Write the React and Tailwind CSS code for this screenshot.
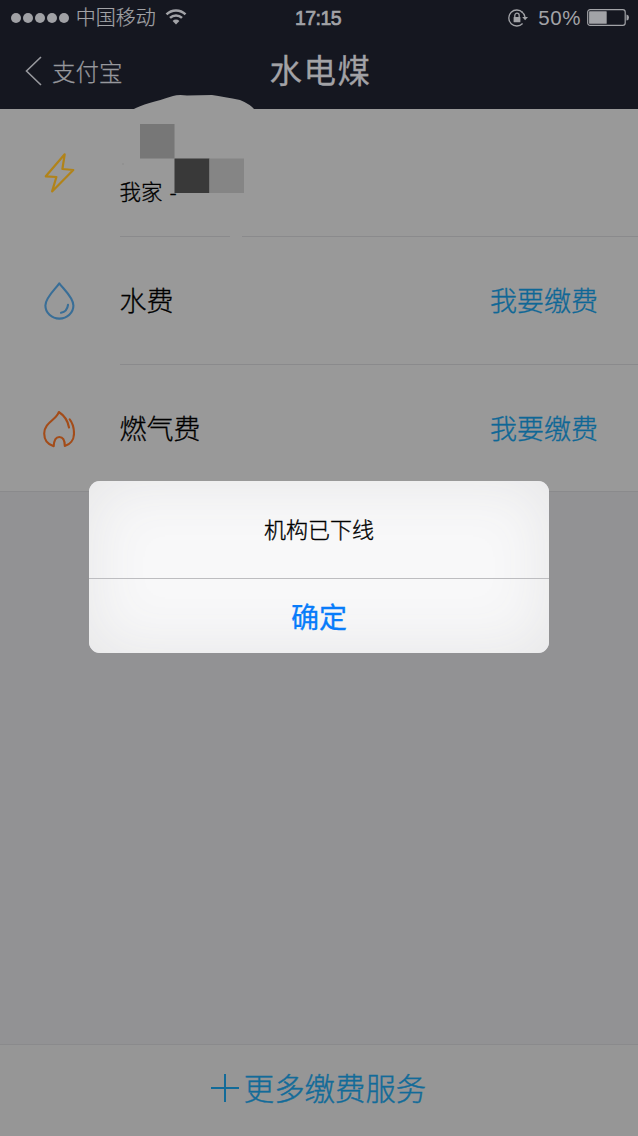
function StatusBar() {
  return (
    <div className="grid h-9 grid-cols-[1fr_auto_1fr] items-center pl-[11px] pr-[9px] text-[#a2a3a7]">
      <div className="flex items-center">
        <div className="flex gap-[2.2px]">
          {[0, 1, 2, 3, 4].map((n) => (
            <span key={n} className="size-[9.8px] rounded-full bg-[#a0a1a5]" />
          ))}
        </div>
        <span className="mb-[2px] ml-[7px] text-[20px] font-light leading-[34px] [-webkit-text-stroke:0.2px]">中国移动</span>
        <svg className="mb-[2px] ml-[9px] h-4 w-[22px]" viewBox="0 0 22 16" fill="none" stroke="currentColor" strokeWidth="2.5">
          <path d="M1.5 5.3 A13.5 13.5 0 0 1 20.5 5.3" />
          <path d="M5 8.9 A8.5 8.5 0 0 1 17 8.9" />
          <path d="M11 15.4 L7.6 12 A4.8 4.8 0 0 1 14.4 12 Z" fill="currentColor" stroke="none" />
        </svg>
      </div>
      <span className="mr-1 font-['Liberation_Sans'] text-[19.5px] font-normal leading-9 tracking-[-0.55px] [-webkit-text-stroke:0.7px]">17:15</span>
      <div className="flex items-center justify-end">
        <svg className="mb-px h-[18px] w-5" viewBox="0 0 20 18" fill="none" stroke="currentColor" strokeWidth="1.3">
          <path d="M14.6 14.5 A8 8 0 1 1 14.6 3.5" />
          <path d="M13.7 2.8 A8 8 0 0 1 17 8" />
          <path d="M14.2 8 H20 L17.1 11.2 Z" fill="currentColor" stroke="none" />
          <rect x="5.6" y="8" width="6.8" height="5.3" rx=".5" fill="currentColor" stroke="none" />
          <path d="M6.8 8.4 V6.4 A2.2 2.2 0 0 1 11.2 6.4 V8.4" />
        </svg>
        <span className="ml-[10px] font-['Liberation_Sans'] text-[20.5px] leading-9 tracking-[0.6px]">50%</span>
        <svg className="mb-px ml-[6px] h-[17px] w-[42px]" viewBox="0 0 42 17" fill="none">
          <rect x=".7" y=".7" width="37.5" height="15.6" rx="2.4" stroke="currentColor" strokeWidth="1.2" />
          <rect x="2.1" y="2.2" width="17.6" height="12.6" rx=".6" fill="#a2a3a7" />
          <path d="M39.5 5.5 Q42 6 42 8.5 Q42 11 39.5 11.5 Z" fill="#a2a3a7" />
        </svg>
      </div>
    </div>
  );
}

function Bolt() {
  return (
    <svg className="h-10 w-8" viewBox="0 0 32 40" fill="none" stroke="#b18319" strokeWidth="2.2" strokeLinejoin="round">
      <path d="M21.7 1.3 L2.8 23.3 L13.4 24 L9.1 38.4 L30.3 17 L19.4 16 Z" />
    </svg>
  );
}

function Drop() {
  return (
    <svg className="mb-[2px] h-10 w-8" viewBox="0 0 32 40" fill="none" stroke="#396e97" strokeWidth="2.1" strokeLinecap="round" strokeLinejoin="round">
      <path d="M16.3 3.3 C12.5 9 2.4 17.3 2.4 25.4 A14 13.2 0 0 0 30.4 25.4 C30.4 17.3 20.5 9 16.3 3.3 Z" />
      <path d="M25 24.8 C24.5 29 22 32 18 32.8" />
    </svg>
  );
}

function Flame() {
  return (
    <svg className="h-10 w-8" viewBox="0 0 32 40" fill="none" stroke="#a34c19" strokeWidth="2.1" strokeLinecap="round" strokeLinejoin="round">
      <path d="M26 18.5 C24.8 11 20.5 6 15.8 3 C14 10.5 1.2 13.5 1.2 24.5 C1.2 31 5 35.5 10.7 37.2 C11 31.5 13 28 16.3 28 C19.7 28 21.8 31.5 21.8 37 C27 35.5 31 31 31 24.5 C31 18.5 30 14.5 26.7 10.3" />
    </svg>
  );
}

function Bill({ icon, name, last }) {
  return (
    <div className="flex h-32">
      <div className="flex w-[120px] items-center pl-[43px]">{icon}</div>
      <div className={`flex flex-1 items-center justify-between pr-[40px] pb-[2px] ${last ? "" : "border-b border-[#8a8a8c]"}`}>
        <span className="-ml-[0.5px] text-[27px] font-light leading-10 text-black [-webkit-text-stroke:0.3px]">{name}</span>
        <span className="text-[27px] font-light leading-10 text-[#0e6796] [-webkit-text-stroke:0.35px]">我要缴费</span>
      </div>
    </div>
  );
}

export default function App() {
  return (
    <div className="relative flex h-[1136px] w-[638px] flex-col overflow-hidden bg-[#929294] font-['Noto_Sans_CJK_SC',sans-serif]">
      <header className="h-[109px] shrink-0 bg-[#151720]">
        <StatusBar />
        <div className="grid h-[73px] grid-cols-[1fr_auto_1fr] items-center pb-[4px] pl-[25px] pr-[22px] text-[#97989d]">
          <div className="flex items-center">
            <svg className="h-[30px] w-[17px]" viewBox="0 0 17 30" fill="none" stroke="currentColor" strokeWidth="1.6">
              <path d="M16 1 L1.5 15 L16 29" />
            </svg>
            <span className="ml-[10px] text-[23.5px] font-light leading-9 [-webkit-text-stroke:0.25px]">支付宝</span>
          </div>
          <h1 className="mb-[4px] text-[32.5px] font-normal leading-[60px] tracking-[1.5px] text-[#a2a2a6] [-webkit-text-stroke:0.3px]">水电煤</h1>
        </div>
      </header>

      <main className="h-[383px] shrink-0 border-b border-[#8a8a8c] bg-[#999]">
        <div className="flex h-32">
          <div className="flex w-[120px] items-center pl-[43px]">
            <Bolt />
          </div>
          <div className="relative flex flex-1 items-end border-b border-[#8a8a8c]">
            <span className="-ml-[0.5px] mb-[29px] flex gap-[7px] text-[21.5px] font-light leading-8 text-black [-webkit-text-stroke:0.3px]">
              <span>我家</span>
              <span>-</span>
            </span>
            <span className="absolute -bottom-px left-[110px] h-px w-3 bg-[#999]" />
          </div>
        </div>
        <Bill icon={<Drop />} name="水费" />
        <Bill icon={<Flame />} name="燃气费" last />
      </main>

      <button className="mt-auto flex h-[92px] items-center justify-center border-t border-[#8a8a8c] bg-[#969696] pb-[5px] pr-px text-[#126b99]">
        <svg className="mr-[5px] h-7 w-7" viewBox="0 0 28 28" stroke="currentColor" strokeWidth="2">
          <path d="M0 14 H28 M14 0 V28" />
        </svg>
        <span className="mb-[2px] text-[30.4px] font-light leading-10 [-webkit-text-stroke:0.4px]">更多缴费服务</span>
      </button>

      <svg className="absolute left-[120px] top-[90px] h-[110px] w-[140px]" viewBox="120 90 140 110">
        <path d="M132 110 C142 104 155 102 173 96 Q178 94.5 187 95.5 L212 95 C220 96 230 98 240 100 Q250 104 255 110 Z" fill="#999" />
        <rect x="140" y="124" width="34.5" height="34.5" fill="#777" />
        <rect x="174.5" y="158.5" width="35" height="34.5" fill="#393939" />
        <rect x="209.5" y="158.5" width="34.5" height="34.5" fill="#858585" />
        <circle cx="123" cy="164" r="1" fill="#909090" />
      </svg>

      <div role="alertdialog" className="absolute left-[89px] top-[481px] flex h-[172px] w-[460px] flex-col overflow-hidden rounded-[11px] bg-[#f8f8f9] text-center shadow-[inset_0_0_60px_4px_#e7e7e8]">
        <p className="h-[98px] border-b border-[#bdbdc0] text-[22px] font-light leading-[95px] text-black [-webkit-text-stroke:0.35px]">机构已下线</p>
        <button className="flex-1 text-[28px] font-normal leading-[72px] text-[#087cfa] [-webkit-text-stroke:0.3px]">确定</button>
      </div>
    </div>
  );
}
